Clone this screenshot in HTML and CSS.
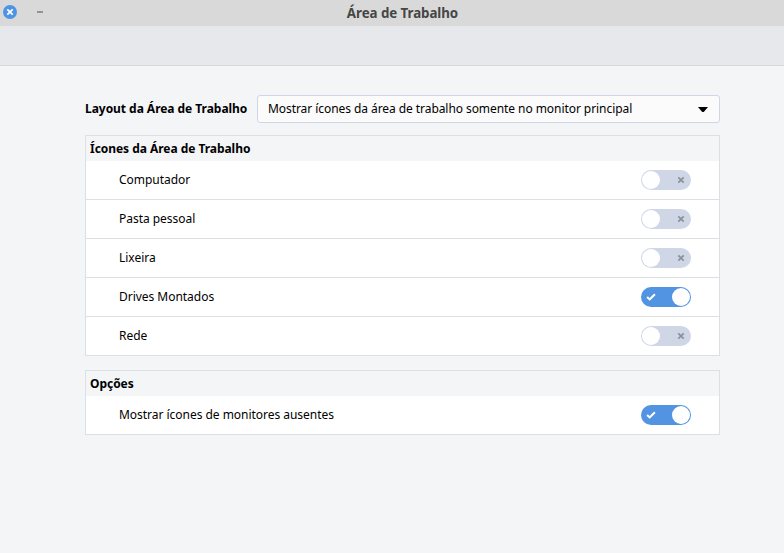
FILE: index.html
```html
<!DOCTYPE html>
<html lang="pt-BR">
<head>
<meta charset="utf-8">
<title>Área de Trabalho</title>
<link rel="stylesheet" href="styles.css">
</head>
<body>
<svg class="defs" width="0" height="0" aria-hidden="true">
  <symbol id="cross" viewBox="0 0 8 8"><path d="M1.3 1.3 6.7 6.7M6.7 1.3 1.3 6.7" fill="none" stroke="currentColor" stroke-width="1.7"/></symbol>
  <symbol id="check" viewBox="0 0 10 8"><path d="M1.1 3.9 3.7 6.4 8.9 1.2" fill="none" stroke="currentColor" stroke-width="2.1"/></symbol>
</svg>
<header class="titlebar">
  <div class="controls">
    <button class="close" aria-label="Fechar"><svg width="8" height="8"><use href="#cross"/></svg></button>
    <button class="minimize" aria-label="Minimizar"></button>
  </div>
  <h1 class="title">Área de Trabalho</h1>
</header>
<div class="toolbar"></div>
<main class="content">
  <div class="layout">
    <span class="layout-label">Layout da Área de Trabalho</span>
    <div class="combo">
      <span>Mostrar ícones da área de trabalho somente no monitor principal</span>
      <svg width="10" height="5" viewBox="0 0 10 5"><path d="M0 0H10L6.2 4.4Q5 5.4 3.8 4.4Z"/></svg>
    </div>
  </div>
  <section class="panel">
    <h2>Ícones da Área de Trabalho</h2>
    <div class="row"><span>Computador</span><div class="switch"><i class="knob"></i><svg class="mark" width="8" height="8"><use href="#cross"/></svg></div></div>
    <div class="row"><span>Pasta pessoal</span><div class="switch"><i class="knob"></i><svg class="mark" width="8" height="8"><use href="#cross"/></svg></div></div>
    <div class="row"><span>Lixeira</span><div class="switch"><i class="knob"></i><svg class="mark" width="8" height="8"><use href="#cross"/></svg></div></div>
    <div class="row"><span>Drives Montados</span><div class="switch on"><svg class="mark" width="10" height="8"><use href="#check"/></svg><i class="knob"></i></div></div>
    <div class="row"><span>Rede</span><div class="switch"><i class="knob"></i><svg class="mark" width="8" height="8"><use href="#cross"/></svg></div></div>
  </section>
  <section class="panel">
    <h2>Opções</h2>
    <div class="row"><span>Mostrar ícones de monitores ausentes</span><div class="switch on"><svg class="mark" width="10" height="8"><use href="#check"/></svg><i class="knob"></i></div></div>
  </section>
</main>
</body>
</html>
```

FILE: styles.css
```css
* { box-sizing: border-box; }
body {
  margin: 0;
  min-height: 100vh;
  background: #f4f5f7;
  color: #000;
  font: 12px/16px "Noto Sans", sans-serif;
}
.defs { display: none; }
button { border: 0; padding: 0; }
svg { display: block; }
.titlebar {
  display: grid;
  grid-template-columns: 100px 1fr 79px;
  align-items: center;
  height: 26px;
  background: #d9d9d9;
}
.controls {
  display: flex;
  align-items: center;
  gap: 20px;
  height: 14px;
  margin: -2px 0 0 3px;
}
.close {
  display: flex;
  align-items: center;
  justify-content: center;
  width: 14px;
  height: 14px;
  border-radius: 50%;
  background: #4f94e4;
  color: #fff;
}
.minimize { width: 6px; height: 2px; background: #929292; }
.title {
  margin: 0;
  color: #464646;
  font-size: 13.33px;
  letter-spacing: -0.06px;
  line-height: 26px;
  text-align: center;
}
.toolbar { height: 40px; background: #e7e8eb; border-bottom: 1px solid #d7d9dc; }
.content { width: 635px; margin-left: 85px; padding-top: 29px; }
.layout { display: flex; align-items: center; justify-content: space-between; height: 28px; }
.layout-label { font-weight: 700; letter-spacing: -0.04px; }
.combo {
  display: flex;
  align-items: center;
  justify-content: space-between;
  width: 463px;
  height: 28px;
  padding: 0 11px 0 10px;
  border: 1px solid #cfd6e6;
  border-radius: 3px;
  background: #fbfbfc;
  letter-spacing: -0.065px;
}
.panel { margin-top: 12px; border: 1px solid #dcdfe3; background: #fff; }
.panel + .panel { margin-top: 14px; }
.panel h2 {
  height: 25px;
  margin: 0;
  padding-left: 4px;
  background: #f4f5f7;
  font-size: 12px;
  letter-spacing: -0.04px;
  line-height: 25px;
}
.row {
  display: flex;
  align-items: center;
  justify-content: space-between;
  height: 38px;
  padding: 0 28px 0 33px;
  letter-spacing: -0.03px;
}
.row + .row { height: 39px; border-top: 1px solid #dcdfe3; }
.switch {
  display: flex;
  align-items: center;
  justify-content: space-between;
  width: 50px;
  height: 20px;
  padding: 0 6px 0 0.6px;
  border-radius: 10px;
  background: #cfd6e6;
  color: #8b909b;
}
.switch.on { padding: 0 0.6px 0 5px; background: #5294e2; color: #fff; }
.knob { width: 18.6px; height: 18.6px; border-radius: 50%; background: #fff; }
```
